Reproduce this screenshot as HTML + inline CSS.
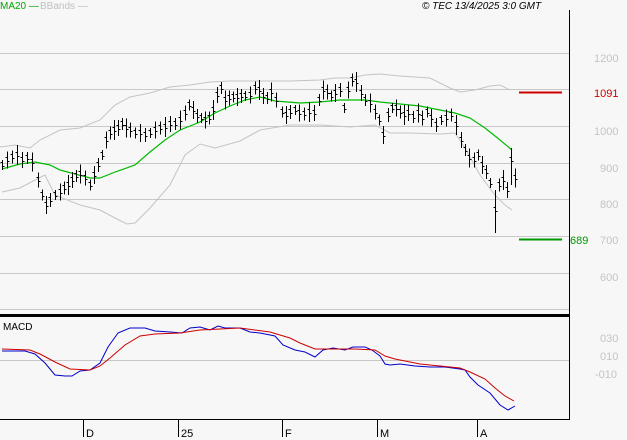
<!DOCTYPE html>
<html><head><meta charset="utf-8"><style>
html,body{margin:0;padding:0;background:#f7f7f7;}
body{width:627px;height:440px;overflow:hidden;position:relative;font-family:"Liberation Sans",sans-serif;}
svg{position:absolute;left:0;top:0}
</style></head><body>
<svg width="627" height="440" viewBox="0 0 627 440" xmlns="http://www.w3.org/2000/svg" shape-rendering="crispEdges">
<rect width="627" height="440" fill="#f7f7f7"/>
<g stroke="#c8c8c8" stroke-width="1">
<line x1="0" y1="53.5" x2="569" y2="53.5"/><line x1="0" y1="89.5" x2="569" y2="89.5"/>
<line x1="0" y1="126.5" x2="569" y2="126.5"/><line x1="0" y1="163.5" x2="569" y2="163.5"/>
<line x1="0" y1="199.5" x2="569" y2="199.5"/><line x1="0" y1="236.5" x2="569" y2="236.5"/>
<line x1="0" y1="273.5" x2="569" y2="273.5"/><line x1="0" y1="309.5" x2="569" y2="309.5"/>
<line x1="0" y1="360.5" x2="569" y2="360.5"/>
</g>
<g fill="none" stroke="#c4c4c4" stroke-width="1" shape-rendering="auto">
<polyline points="0,147 15,145 30,148 40,140 60,130 80,128 100,120 115,105 130,97 150,93 170,87 190,85 210,82 230,81 260,81 290,81 320,80 335,78 350,78 365,75 380,74 400,76 430,78 450,88 460,92 475,90 490,86 500,85 510,90"/>
<polyline points="2,192 20,188 35,180 45,175 55,195 80,205 100,210 115,218 127,224 135,223 150,208 170,185 185,155 200,144 215,148 240,141 260,130 290,125 320,125 350,127 375,125 390,133 410,133 440,134 455,133 465,148 480,175 495,195 505,205 512,210"/>
</g>
<polyline fill="none" stroke="#00bb00" stroke-width="1.2" shape-rendering="auto" points="2,169 20,164 35,162 50,165 60,170 75,174 90,178 100,178 115,172 135,165 150,152 165,140 180,130 200,122 215,113 230,106 245,100 260,97 275,101 300,103 320,102 340,100 365,100 380,102 400,104 420,106 440,110 455,113 470,118 485,128 500,140 512,150"/>
<path id="bars" stroke="#000" stroke-width="1" fill="none"/>
<line x1="519" y1="92.5" x2="562" y2="92.5" stroke="#cc0000" stroke-width="2"/>
<line x1="519" y1="239.5" x2="562" y2="239.5" stroke="#009900" stroke-width="2"/>
<polyline fill="none" stroke="#0000cc" stroke-width="1" shape-rendering="auto" points="2,351 25,351 35,354 45,363 55,375 65,376 72,376 80,371 90,370 100,363 108,347 118,333 130,328 145,328 155,331 170,332 182,333 190,328 200,327 210,330 218,326 225,328 240,328 250,332 260,333 275,336 283,345 295,350 305,352 315,357 323,350 333,348 345,350 353,347 365,347 372,350 380,356 385,364 390,365 400,364 415,366 430,367 445,367 460,369 465,370 470,377 478,385 490,393 500,405 508,410 515,406"/>
<polyline fill="none" stroke="#cc0000" stroke-width="1" shape-rendering="auto" points="2,349 30,350 40,354 55,362 70,369 90,370 100,366 110,358 125,345 140,336 155,334 180,333 200,330 240,328 270,332 290,338 300,343 315,349 340,349 355,349 375,350 385,356 395,359 420,364 440,366 450,367 460,368 470,372 485,379 495,388 505,396 514,401"/>
<line x1="569.5" y1="10" x2="569.5" y2="420" stroke="#000"/>
<line x1="0" y1="315.5" x2="570" y2="315.5" stroke="#000" stroke-width="3"/>
<line x1="0" y1="419.5" x2="570" y2="419.5" stroke="#000"/>
<g stroke="#000"><line x1="83.5" y1="419" x2="83.5" y2="437"/><line x1="178.5" y1="419" x2="178.5" y2="437"/><line x1="282.5" y1="419" x2="282.5" y2="437"/><line x1="377.5" y1="419" x2="377.5" y2="437"/><line x1="477.5" y1="419" x2="477.5" y2="437"/></g>
<g font-family="Liberation Sans, sans-serif" font-size="11" shape-rendering="auto">
<text x="0" y="9" fill="#00aa00" font-size="10">MA20 —</text>
<text x="40" y="9" fill="#c0c0c0" font-size="10">BBands —</text>
<text x="422" y="9" fill="#000" font-size="10" font-style="italic">© TEC 13/4/2025 3:0 GMT</text>
<g fill="#c4c4c4">
<text x="594" y="62">1200</text><text x="594" y="135">1000</text><text x="600" y="172">900</text>
<text x="600" y="208">800</text><text x="600" y="244">700</text><text x="600" y="281">600</text>
<text x="600" y="342">030</text><text x="600" y="360">010</text><text x="595" y="378">-010</text>
</g>
<text x="594" y="97" fill="#cc0000" font-size="11">1091</text>
<text x="570" y="244" fill="#009900" font-size="11">689</text>
<text x="3" y="330" fill="#000" font-size="10">MACD</text>
<text x="86" y="437" fill="#000">D</text><text x="181" y="437" fill="#000">25</text>
<text x="285" y="437" fill="#000">F</text><text x="380" y="437" fill="#000">M</text><text x="480" y="437" fill="#000">A</text>
</g>
</svg>
<script>
var c=[[2,165],[7,160],[12,157],[17,155],[22,160],[27,158],[32,162],[38,180],[42,195],[46,205],[50,200],[55,195],[60,192],[64,188],[68,185],[72,180],[76,176],[80,174],[85,178],[90,185],[94,175],[98,165],[102,155],[106,140],[110,133],[114,130],[118,128],[122,124],[126,128],[130,130],[135,133],[140,133],[145,135],[150,133],[155,130],[160,128],[165,127],[170,124],[175,124],[180,120],[185,113],[189,105],[193,110],[197,116],[201,118],[205,120],[209,118],[213,110],[217,95],[221,88],[225,100],[229,98],[233,97],[237,97],[241,96],[245,96],[250,95],[255,88],[259,90],[263,96],[267,98],[271,92],[276,100],[282,112],[286,115],[290,112],[295,110],[299,113],[304,114],[309,112],[314,113],[319,100],[323,90],[327,92],[331,96],[335,93],[340,90],[344,108],[348,90],[352,80],[356,82],[361,93],[365,100],[370,103],[375,112],[379,120],[383,135],[388,115],[392,108],[396,108],[400,112],[404,115],[408,113],[413,117],[418,113],[422,118],[427,112],[431,118],[436,125],[441,120],[446,118],[451,115],[456,125],[461,140],[465,150],[469,158],[474,160],[478,155],[482,165],[486,172],[490,183],[495,210],[499,185],[503,180],[507,190],[511,160],[515,178]];
var d="";c.forEach(function(b,i){var x=b[0]+0.5,y=b[1],h=10+((i*7)%11);var t=y-h/2,bo=y+h/2;if(b[0]==495){t=190;bo=233;}if(b[0]==511){t=148;bo=185;}d+="M"+x+" "+t+"V"+bo+"M"+(x-2)+" "+(y-2.5)+"h2M"+x+" "+(y+1.5)+"h2";});
document.getElementById("bars").setAttribute("d",d);
</script>
</body></html>
